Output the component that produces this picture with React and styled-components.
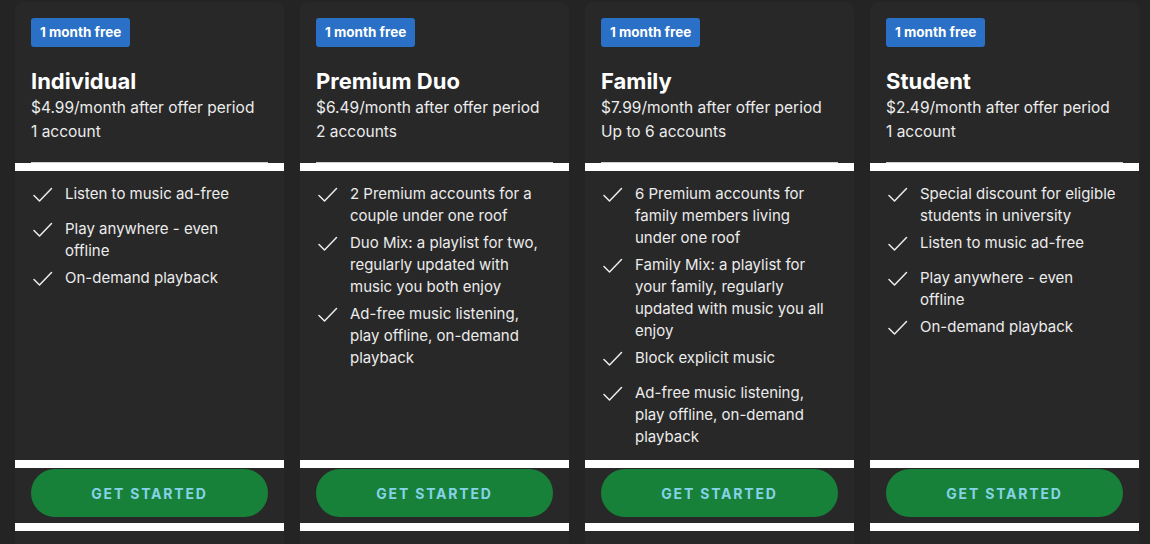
import React from 'react';
import styled, { createGlobalStyle } from 'styled-components';

const GlobalStyle = createGlobalStyle`
  html, body {
    margin: 0;
    background: #242424;
    font-family: Inter, "Noto Sans", sans-serif;
    -webkit-font-smoothing: antialiased;
  }
`;

const Grid = styled.div`
  display: grid;
  grid-template-columns: repeat(4, 269px);
  column-gap: 16px;
  padding: 2px 11px 0 15px;
`;

const Card = styled.div`
  display: flex;
  flex-direction: column;
  background: #282828;
  border-radius: 8px 8px 0 0;
  padding-bottom: 24px;
`;

const Header = styled.div`
  padding: 16px 16px 0;
`;

const Badge = styled.span`
  display: inline-block;
  background: #2a70c6;
  color: #fff;
  font-size: 13.5px;
  font-weight: 700;
  line-height: 29px;
  padding: 0 9px;
  border-radius: 3px;
`;

const Title = styled.h2`
  margin: 20px 0 0;
  color: #fff;
  font-size: 22px;
  font-weight: 700;
  line-height: 29px;
`;

const Line = styled.p`
  margin: 0;
  color: #ececec;
  font-size: 15.5px;
  line-height: 24px;
`;

const Rule = styled.div`
  margin: 18px 16px 0;
  height: 1px;
  background: #cfcfcf;
`;

const Bar = styled.div`
  height: 8px;
  background: #fff;
`;

const Features = styled.ul`
  flex: 1;
  list-style: none;
  margin: 0;
  padding: 12px 16px 12px;
`;

const Feature = styled.li`
  display: flex;
  gap: 12px;
  min-height: 30px;
  margin-bottom: 5px;
  color: #ececec;
  font-size: 15px;
  line-height: 22px;
  &:last-child {
    margin-bottom: 0;
  }
`;

const Check = styled.svg`
  flex: none;
  width: 20px;
  height: 20px;
  margin: 2px 0 0 2px;
`;

const Text = styled.span`
  max-width: 196px;
`;

const Button = styled.button`
  display: block;
  margin: 1px 16px 6px;
  height: 48px;
  border: none;
  border-radius: 24px;
  background: #188139;
  color: #86d3e8;
  font-family: inherit;
  font-size: 14px;
  font-weight: 700;
  letter-spacing: 1.8px;
  text-transform: uppercase;
`;

const plans = [
  {
    name: 'Individual',
    price: '$4.99',
    accounts: '1 account',
    features: ['Listen to music ad-free', 'Play anywhere - even offline', 'On-demand playback'],
  },
  {
    name: 'Premium Duo',
    price: '$6.49',
    accounts: '2 accounts',
    features: [
      '2 Premium accounts for a couple under one roof',
      'Duo Mix: a playlist for two, regularly updated with music you both enjoy',
      'Ad-free music listening, play offline, on-demand playback',
    ],
  },
  {
    name: 'Family',
    price: '$7.99',
    accounts: 'Up to 6 accounts',
    features: [
      '6 Premium accounts for family members living under one roof',
      'Family Mix: a playlist for your family, regularly updated with music you all enjoy',
      'Block explicit music',
      'Ad-free music listening, play offline, on-demand playback',
    ],
  },
  {
    name: 'Student',
    price: '$2.49',
    accounts: '1 account',
    features: [
      'Special discount for eligible students in university',
      'Listen to music ad-free',
      'Play anywhere - even offline',
      'On-demand playback',
    ],
  },
];

const CheckIcon = () => (
  <Check viewBox="0 0 20 20" fill="none">
    <path d="M1 10.5 L6.5 16 L18.5 3.5" stroke="#ececec" strokeWidth="1.5" strokeLinecap="round" strokeLinejoin="round" />
  </Check>
);

export default function App() {
  return (
    <>
      <GlobalStyle />
      <Grid>
        {plans.map((plan) => (
          <Card key={plan.name}>
            <Header>
              <Badge>1 month free</Badge>
              <Title>{plan.name}</Title>
              <Line>{plan.price}/month after offer period</Line>
              <Line>{plan.accounts}</Line>
            </Header>
            <Rule />
            <Bar />
            <Features>
              {plan.features.map((f) => (
                <Feature key={f}>
                  <CheckIcon />
                  <Text>{f}</Text>
                </Feature>
              ))}
            </Features>
            <Bar />
            <Button>Get started</Button>
            <Bar />
          </Card>
        ))}
      </Grid>
    </>
  );
}
